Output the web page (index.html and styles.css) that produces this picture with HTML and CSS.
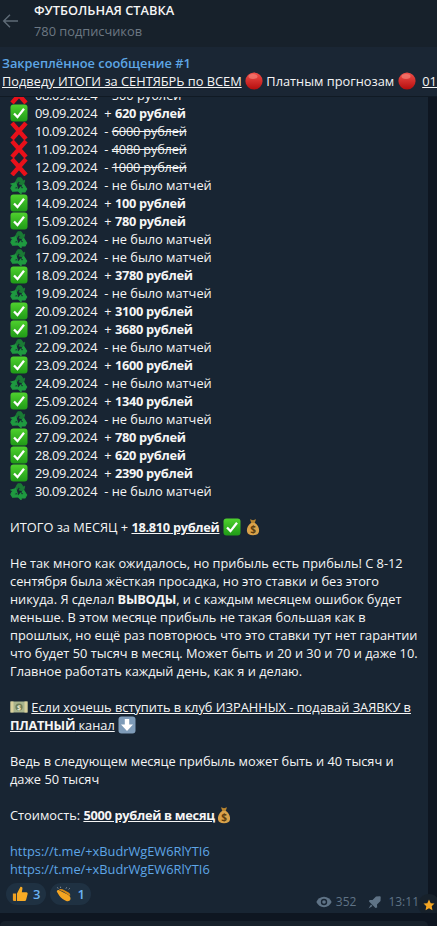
FILE: index.html
```html
<!DOCTYPE html>
<html lang="ru">
<head>
    <meta charset="UTF-8">
    <meta name="viewport" content="width=device-width, initial-scale=1.0">
    <title>ФУТБОЛЬНАЯ СТАВКА</title>
    <link rel="stylesheet" href="styles.css">
</head>
<body>

    <svg class="sprites" width="0" height="0" aria-hidden="true">
        <defs>
            <linearGradient id="redball" x1="0" y1="0" x2="0" y2="1">
                <stop offset="0" stop-color="#f0504a"/>
                <stop offset="1" stop-color="#b50d0d"/>
            </linearGradient>
            <linearGradient id="greenbox" x1="0" y1="0" x2="0" y2="1">
                <stop offset="0" stop-color="#4fd12e"/>
                <stop offset="1" stop-color="#1f9a17"/>
            </linearGradient>
            <path id="recycle-arm" d="M5.200 6.600L7.700 1.800h3.500l2 3.300 1.500-.9-1.200 4.700-4.600-1 1.400-.9-1.500-2.500-1.500 2.800z"/>
        </defs>
        <symbol id="e-check" viewBox="0 0 18 18">
            <rect x="0.500" y="0.500" width="17" height="17" rx="3" fill="url(#greenbox)"/>
            <path d="M4 9.500l3.500 3.600L14 4.800" fill="none" stroke="#fff" stroke-width="2.300"/>
        </symbol>
        <symbol id="e-cross" viewBox="0 0 18 18">
            <path d="M2 1L16 17M16 1L2 17" stroke="#e8101a" stroke-width="4.400" fill="none"/>
        </symbol>
        <symbol id="e-recycle" viewBox="0 0 18 18">
            <use href="#recycle-arm" fill="#1a7a35" stroke="#1a7a35" stroke-width="1"/>
            <use href="#recycle-arm" fill="#1f9a40" stroke="#1f9a40" stroke-width="1" transform="rotate(120 9 10)"/>
            <use href="#recycle-arm" fill="#1f9a40" stroke="#1f9a40" stroke-width="1" transform="rotate(240 9 10)"/>
        </symbol>
        <symbol id="e-bag" viewBox="0 0 18 18">
            <path d="M6 1.200l3 1 3-1-1.300 3.800H7.300z" fill="#b9852f"/>
            <path d="M7 5h4c3 2 4.500 5.500 4 8.500-.4 2.700-2.500 3.700-6 3.700s-5.600-1-6-3.700C2.500 10.500 4 7 7 5z" fill="#d9a24a"/>
            <text x="9" y="14.500" class="bag-sign">$</text>
        </symbol>
        <symbol id="e-cash" viewBox="0 0 18 18">
            <rect x="0.500" y="3.500" width="17" height="11" fill="#a8b48c"/>
            <rect x="0.500" y="3.500" width="3" height="11" fill="#d8d09c"/>
            <rect x="14.500" y="3.500" width="3" height="11" fill="#d8d09c"/>
            <circle cx="9" cy="9" r="3.600" fill="#6f7d58"/>
            <text x="9" y="11.500" class="cash-sign">$</text>
        </symbol>
        <symbol id="e-down" viewBox="0 0 18 18">
            <rect x="0.500" y="0.500" width="17" height="17" rx="3" fill="#7e9bb8"/>
            <path d="M6.800 3h4.400v5.500H15l-6 6.500-6-6.500h3.800z" fill="#fff"/>
        </symbol>
        <symbol id="e-ball" viewBox="0 0 18 18">
            <circle cx="9" cy="9" r="8.600" fill="url(#redball)"/>
            <ellipse cx="8" cy="4.500" rx="4.500" ry="2.400" fill="#f58a80" opacity="0.600"/>
        </symbol>
        <symbol id="e-thumb" viewBox="0 0 18 18">
            <path d="M1 8.500h3.600v8.500H2.300A1.300 1.300 0 0 1 1 15.700z" fill="#f0a020"/>
            <path d="M5.600 8.500L9.400 1c1.600-.5 2.700.6 2.300 2.400l-.7 3.600h5c1.500 0 1.900 1.200 1.500 2.400l-1.600 6c-.3 1.100-1 1.600-2.100 1.600H5.600z" fill="#f8ab25"/>
        </symbol>
        <symbol id="e-clap" viewBox="0 0 18 18">
            <path d="M1 6.500c-.4-1.400 1-2.700 2.500-1.800l9.500 4.800c2.500 1.400 3.800 3.300 3.300 5.300-.5 1.800-2.500 2.700-4.700 2-3-.9-6.200-3.300-8-6.100z" fill="#f4a522"/>
            <path d="M3 4.200c1.300-1.200 4-.9 6 .2l5.200 2.800c1.500.8 2.200 2.400 1.600 4L8 6.200z" fill="#d98a14"/>
            <path d="M1.500 1.500l1 1.500M5 .8l.3 1.500M12 1.500l-.8 1.500M15.500 2.500l-1.200 1.300" stroke="#8f9aa6" stroke-width="1" fill="none"/>
        </symbol>
    </svg>

    <div class="app">
        <header class="topbar">
            <svg class="back-icon" width="16" height="14" viewBox="0 0 16 14">
                <path d="M8 .8L1.700 7 8 13.200M1.700 7H16" fill="none" stroke="#5f6b77" stroke-width="1.400"/>
            </svg>
            <div class="channel">
                <div class="channel-name">ФУТБОЛЬНАЯ СТАВКА</div>
                <div class="channel-subs">780 подписчиков</div>
            </div>
        </header>

        <div class="pinned">
            <div class="pinned-title">Закреплённое сообщение #1</div>
            <div class="pinned-text"><u>Подведу ИТОГИ за СЕНТЯБРЬ по ВСЕМ</u> <svg class="emoji"><use href="#e-ball"/></svg> Платным прогнозам <svg class="emoji"><use href="#e-ball"/></svg> &nbsp;<u>01.10.2024</u></div>
        </div>

        <main class="chat">
            <article class="message">
                <div class="day-list">
                    <div><svg class="emoji"><use href="#e-cross"/></svg><span class="date">08.09.2024</span>- 500 рублей</div>
                    <div><svg class="emoji"><use href="#e-check"/></svg><span class="date">09.09.2024</span>+ <b>620 рублей</b></div>
                    <div><svg class="emoji"><use href="#e-cross"/></svg><span class="date">10.09.2024</span>- <s>6000 рублей</s></div>
                    <div><svg class="emoji"><use href="#e-cross"/></svg><span class="date">11.09.2024</span>- <s>4080 рублей</s></div>
                    <div><svg class="emoji"><use href="#e-cross"/></svg><span class="date">12.09.2024</span>- <s>1000 рублей</s></div>
                    <div><svg class="emoji"><use href="#e-recycle"/></svg><span class="date">13.09.2024</span>- не было матчей</div>
                    <div><svg class="emoji"><use href="#e-check"/></svg><span class="date">14.09.2024</span>+ <b>100 рублей</b></div>
                    <div><svg class="emoji"><use href="#e-check"/></svg><span class="date">15.09.2024</span>+ <b>780 рублей</b></div>
                    <div><svg class="emoji"><use href="#e-recycle"/></svg><span class="date">16.09.2024</span>- не было матчей</div>
                    <div><svg class="emoji"><use href="#e-recycle"/></svg><span class="date">17.09.2024</span>- не было матчей</div>
                    <div><svg class="emoji"><use href="#e-check"/></svg><span class="date">18.09.2024</span>+ <b>3780 рублей</b></div>
                    <div><svg class="emoji"><use href="#e-recycle"/></svg><span class="date">19.09.2024</span>- не было матчей</div>
                    <div><svg class="emoji"><use href="#e-check"/></svg><span class="date">20.09.2024</span>+ <b>3100 рублей</b></div>
                    <div><svg class="emoji"><use href="#e-check"/></svg><span class="date">21.09.2024</span>+ <b>3680 рублей</b></div>
                    <div><svg class="emoji"><use href="#e-recycle"/></svg><span class="date">22.09.2024</span>- не было матчей</div>
                    <div><svg class="emoji"><use href="#e-check"/></svg><span class="date">23.09.2024</span>+ <b>1600 рублей</b></div>
                    <div><svg class="emoji"><use href="#e-recycle"/></svg><span class="date">24.09.2024</span>- не было матчей</div>
                    <div><svg class="emoji"><use href="#e-check"/></svg><span class="date">25.09.2024</span>+ <b>1340 рублей</b></div>
                    <div><svg class="emoji"><use href="#e-recycle"/></svg><span class="date">26.09.2024</span>- не было матчей</div>
                    <div><svg class="emoji"><use href="#e-check"/></svg><span class="date">27.09.2024</span>+ <b>780 рублей</b></div>
                    <div><svg class="emoji"><use href="#e-check"/></svg><span class="date">28.09.2024</span>+ <b>620 рублей</b></div>
                    <div><svg class="emoji"><use href="#e-check"/></svg><span class="date">29.09.2024</span>+ <b>2390 рублей</b></div>
                    <div><svg class="emoji"><use href="#e-recycle"/></svg><span class="date">30.09.2024</span>- не было матчей</div>
                </div>

                <p>ИТОГО за МЕСЯЦ + <b><u>18.810 рублей</u></b> <svg class="emoji"><use href="#e-check"/></svg> <svg class="emoji"><use href="#e-bag"/></svg></p>

                <p>Не так много как ожидалось, но прибыль есть прибыль! С 8-12 сентября была жёсткая просадка, но это ставки и без этого никуда. Я сделал <b>ВЫВОДЫ</b>, и с каждым месяцем ошибок будет меньше. В этом месяце прибыль не такая большая как в прошлых, но ещё раз повторюсь что это ставки тут нет гарантии что будет 50 тысяч в месяц. Может быть и 20 и 30 и 70 и даже 10. Главное работать каждый день, как я и делаю.</p>

                <p><svg class="emoji"><use href="#e-cash"/></svg> <u>Если хочешь вступить в клуб ИЗРАННЫХ - подавай ЗАЯВКУ в <b>ПЛАТНЫЙ</b> канал</u> <svg class="emoji"><use href="#e-down"/></svg></p>

                <p>Ведь в следующем месяце прибыль может быть и 40 тысяч и даже 50 тысяч</p>

                <p>Стоимость: <b><u>5000 рублей в месяц</u></b><svg class="emoji"><use href="#e-bag"/></svg></p>

                <p class="links">https://t.me/+xBudrWgEW6RlYTI6<br>https://t.me/+xBudrWgEW6RlYTI6</p>

                <div class="msg-footer">
                    <div class="reactions">
                        <span class="reaction"><svg class="react-icon"><use href="#e-thumb"/></svg>3</span>
                        <span class="reaction"><svg class="react-icon"><use href="#e-clap"/></svg>1</span>
                    </div>
                    <div class="msg-meta">
                        <svg class="eye-icon" width="16" height="12" viewBox="0 0 16 12">
                            <path d="M8 .8C4.500.8 1.700 3 .4 6c1.300 3 4.100 5.200 7.600 5.200S14.300 9 15.600 6C14.300 3 11.500.8 8 .8z" fill="#5f7386"/>
                            <circle cx="8" cy="6" r="3.200" fill="#182533"/>
                            <circle cx="8" cy="6" r="1.800" fill="#5f7386"/>
                        </svg>
                        <span class="views">352</span>
                        <svg class="pin-icon" width="13" height="13" viewBox="0 0 13 13">
                            <path d="M8 .5l3.500-.2c.8 0 1.300.5 1.200 1.200L12.500 5 9 8.600l.2 3L7.500 12 1 5.500l.5-1.500 3-.1zM3 8.500L.5 12.500l4-2.500z" fill="#5f7386"/>
                        </svg>
                        <span class="time">13:11</span>
                    </div>
                </div>
                <span class="star-badge">
                    <svg width="12" height="12" viewBox="0 0 24 24"><path d="M12 1l3.400 7.300 7.600.9-5.600 5.300 1.500 8L12 18.500 5.100 22.500l1.500-8L1 9.200l7.600-.9z" fill="#f5a623"/></svg>
                </span>
            </article>
        </main>

        <div class="composer"></div>
    </div>

</body>
</html>
```

FILE: styles.css
```css
* {
    box-sizing: border-box;
}

html, body {
    margin: 0;
    padding: 0;
    height: 100%;
}

body {
    font-family: 'Open Sans', sans-serif;
    font-size: 12.8px;
    line-height: 18px;
    background-color: #0e1621;
    color: #f5f5f5;
    overflow: hidden;
}

.sprites {
    position: absolute;
}

.app {
    display: flex;
    flex-direction: column;
    height: 926px;
}

.topbar {
    display: flex;
    align-items: flex-start;
    height: 47px;
    flex-shrink: 0;
    background-color: #17212b;
    padding-left: 2px;
}

.back-icon {
    flex-shrink: 0;
    margin-top: 14px;
}

.channel {
    margin-left: 16px;
}

.channel-name {
    font-weight: 600;
    line-height: 20px;
    color: #f5f5f5;
}

.channel-subs {
    line-height: 20px;
    margin-top: 1px;
    color: #6d7883;
}

.pinned {
    height: 49px;
    flex-shrink: 0;
    padding: 7px 0 0 2px;
    background-color: #1a2634;
    white-space: nowrap;
    overflow: hidden;
    position: relative;
    z-index: 1;
    box-shadow: 0 1px 0 #101a24;
}

.pinned-title {
    color: #5ea6e6;
    font-weight: 600;
    line-height: 18px;
}

.pinned-text {
    line-height: 18px;
}

.chat {
    flex: 1;
    overflow: hidden;
}

.message {
    position: relative;
    width: 428px;
    height: 827px;
    margin-top: -10px;
    padding: 0 10px;
    background-color: #182533;
}

.day-list {
    margin-bottom: 18px;
}

.day-list div {
    white-space: nowrap;
}

.date {
    display: inline-block;
    margin: 0 7px;
    letter-spacing: -0.3px;
}

.message b {
    letter-spacing: -0.3px;
}

.message s {
    letter-spacing: -0.2px;
}

.message p {
    margin: 0 0 18px;
}

.emoji {
    width: 18px;
    height: 18px;
    vertical-align: -4px;
}

.links {
    color: #5ea6e6;
}

.message p.links {
    margin-bottom: 0;
}

.msg-footer {
    display: flex;
    justify-content: space-between;
    margin: 5px -4px 0;
}

.reactions {
    display: flex;
    gap: 4px;
}

.reaction {
    display: flex;
    align-items: center;
    gap: 5px;
    height: 22px;
    padding: 0 6px 0 6px;
    border-radius: 11px;
    background-color: #1f3142;
    color: #6ab2f2;
    font-weight: 600;
    font-size: 13px;
}

.react-icon {
    width: 16px;
    height: 16px;
}

.msg-meta {
    display: flex;
    align-items: center;
    gap: 4px;
    height: 18px;
    margin-top: 10px;
    margin-right: 3px;
    color: #5f7386;
    font-size: 12px;
}

.views {
    margin-right: 8px;
}

.time {
    margin-left: 3px;
}

.star-badge {
    position: absolute;
    right: -12px;
    bottom: -3px;
    width: 22px;
    height: 22px;
    border-radius: 50%;
    background-color: #17212b;
    display: flex;
    align-items: center;
    justify-content: center;
}

.bag-sign {
    font-family: 'Open Sans', sans-serif;
    font-size: 10px;
    font-weight: 700;
    text-anchor: middle;
    fill: #5c3d10;
}

.cash-sign {
    font-family: 'Open Sans', sans-serif;
    font-size: 7px;
    font-weight: 700;
    text-anchor: middle;
    fill: #e8e6c8;
}

.composer {
    height: 5px;
    flex-shrink: 0;
    margin: 8px 9px 0 0;
    background-color: #17212b;
    border-radius: 8px 8px 0 0;
}
```
